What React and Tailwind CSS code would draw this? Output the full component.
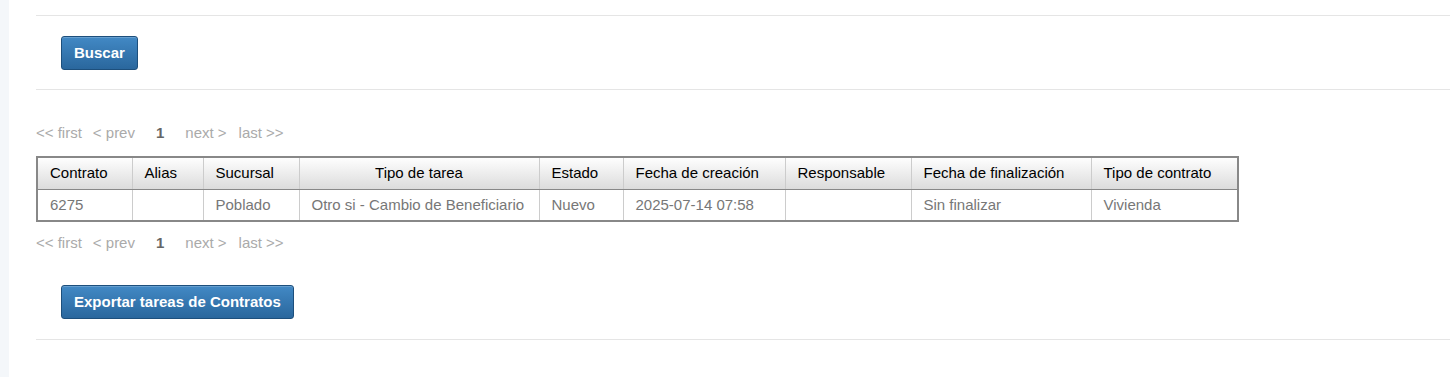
const cols = [
  { label: 'Contrato', w: 'w-[95px]' },
  { label: 'Alias', w: 'w-[71px]' },
  { label: 'Sucursal', w: 'w-[96px]' },
  { label: 'Tipo de tarea', w: 'w-[240px]', center: true },
  { label: 'Estado', w: 'w-[84px]' },
  { label: 'Fecha de creación', w: 'w-[162px]' },
  { label: 'Responsable', w: 'w-[126px]' },
  { label: 'Fecha de finalización', w: 'w-[180px]' },
  { label: 'Tipo de contrato', w: 'w-[147px]' },
];

const row = ['6275', '', 'Poblado', 'Otro si - Cambio de Beneficiario', 'Nuevo', '2025-07-14 07:58', '', 'Sin finalizar', 'Vivienda'];

function Pager() {
  return (
    <div className="flex items-center text-[15px] text-[#aaa] h-[20px]">
      <span>&lt;&lt; first</span>
      <span className="ml-[11px]">&lt; prev</span>
      <span className="ml-[21px] font-bold text-[#666]">1</span>
      <span className="ml-[21px]">next &gt;</span>
      <span className="ml-[12px]">last &gt;&gt;</span>
    </div>
  );
}

function BlueButton({ children }) {
  return (
    <button className="h-[34px] px-[12px] rounded-[3px] border border-[#1d4f7c] bg-linear-to-b from-[#4289c5] to-[#2a679d] text-white font-bold text-[15px] shadow-[inset_0_1px_0_rgba(255,255,255,0.2)]">
      {children}
    </button>
  );
}

export default function App() {
  return (
    <div className="flex w-[1450px] h-[377px] bg-white font-['Liberation_Sans',Arial,sans-serif]">
      <div className="w-[9px] bg-[#f4f7fa] shrink-0" />
      <div className="flex-1 pl-[27px] pt-[15px]">
        <div className="border-t border-[#e5e5e5] pl-[25px] pt-[20px] pb-[19px]">
          <BlueButton>Buscar</BlueButton>
        </div>
        <div className="border-t border-[#e5e5e5] pt-[33px]">
          <Pager />
          <table className="mt-[13px] w-[1203px] table-fixed border-collapse border-2 border-[#888] text-[15px]">
            <colgroup>
              {cols.map((c) => (
                <col key={c.label} className={c.w} />
              ))}
            </colgroup>
            <thead>
              <tr className="bg-linear-to-b from-white to-[#dcdcdc] h-[32px]">
                {cols.map((c) => (
                  <th
                    key={c.label}
                    className={`border-l border-[#ccc] border-b border-b-[#888] px-[12px] font-normal text-black whitespace-nowrap ${c.center ? 'text-center' : 'text-left'}`}
                  >
                    {c.label}
                  </th>
                ))}
              </tr>
            </thead>
            <tbody>
              <tr className="h-[32px]">
                {row.map((v, i) => (
                  <td key={i} className="border-l border-[#ccc] px-[12px] text-[#777] whitespace-nowrap">
                    {v}
                  </td>
                ))}
              </tr>
            </tbody>
          </table>
          <div className="mt-[11px]">
            <Pager />
          </div>
          <div className="pl-[25px] pt-[32px] pb-[20px]">
            <BlueButton>Exportar tareas de Contratos</BlueButton>
          </div>
          <div className="border-t border-[#e5e5e5]" />
        </div>
      </div>
    </div>
  );
}
